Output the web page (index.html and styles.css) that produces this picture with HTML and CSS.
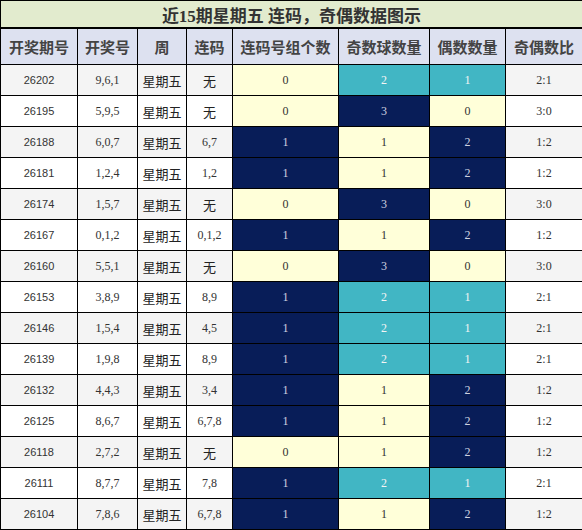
FILE: index.html
```html
<!DOCTYPE html>
<html lang="zh">
<head>
    <meta charset="UTF-8">
    <title>近15期星期五 连码，奇偶数据图示</title>
    <link rel="stylesheet" href="styles.css">
</head>
<body>
    <table class="chart">
        <colgroup>
            <col class="w-issue">
            <col class="w-nums">
            <col class="w-week">
            <col class="w-link">
            <col class="w-group">
            <col class="w-odd">
            <col class="w-even">
            <col class="w-ratio">
        </colgroup>
        <thead>
            <tr class="title-row">
                <th colspan="8">近15期星期五 连码，奇偶数据图示</th>
            </tr>
            <tr class="head-row">
                <th>开奖期号</th>
                <th>开奖号</th>
                <th>周</th>
                <th>连码</th>
                <th>连码号组个数</th>
                <th>奇数球数量</th>
                <th>偶数数量</th>
                <th>奇偶数比</th>
            </tr>
        </thead>
        <tbody>
            <tr><td class="issue">26202</td><td>9,6,1</td><td class="cn">星期五</td><td class="cn">无</td><td class="lo">0</td><td class="mid">2</td><td class="mid">1</td><td>2:1</td></tr>
            <tr><td class="issue">26195</td><td>5,9,5</td><td class="cn">星期五</td><td class="cn">无</td><td class="lo">0</td><td class="hi">3</td><td class="lo">0</td><td>3:0</td></tr>
            <tr><td class="issue">26188</td><td>6,0,7</td><td class="cn">星期五</td><td>6,7</td><td class="hi">1</td><td class="lo">1</td><td class="hi">2</td><td>1:2</td></tr>
            <tr><td class="issue">26181</td><td>1,2,4</td><td class="cn">星期五</td><td>1,2</td><td class="hi">1</td><td class="lo">1</td><td class="hi">2</td><td>1:2</td></tr>
            <tr><td class="issue">26174</td><td>1,5,7</td><td class="cn">星期五</td><td class="cn">无</td><td class="lo">0</td><td class="hi">3</td><td class="lo">0</td><td>3:0</td></tr>
            <tr><td class="issue">26167</td><td>0,1,2</td><td class="cn">星期五</td><td>0,1,2</td><td class="hi">1</td><td class="lo">1</td><td class="hi">2</td><td>1:2</td></tr>
            <tr><td class="issue">26160</td><td>5,5,1</td><td class="cn">星期五</td><td class="cn">无</td><td class="lo">0</td><td class="hi">3</td><td class="lo">0</td><td>3:0</td></tr>
            <tr><td class="issue">26153</td><td>3,8,9</td><td class="cn">星期五</td><td>8,9</td><td class="hi">1</td><td class="mid">2</td><td class="mid">1</td><td>2:1</td></tr>
            <tr><td class="issue">26146</td><td>1,5,4</td><td class="cn">星期五</td><td>4,5</td><td class="hi">1</td><td class="mid">2</td><td class="mid">1</td><td>2:1</td></tr>
            <tr><td class="issue">26139</td><td>1,9,8</td><td class="cn">星期五</td><td>8,9</td><td class="hi">1</td><td class="mid">2</td><td class="mid">1</td><td>2:1</td></tr>
            <tr><td class="issue">26132</td><td>4,4,3</td><td class="cn">星期五</td><td>3,4</td><td class="hi">1</td><td class="lo">1</td><td class="hi">2</td><td>1:2</td></tr>
            <tr><td class="issue">26125</td><td>8,6,7</td><td class="cn">星期五</td><td>6,7,8</td><td class="hi">1</td><td class="lo">1</td><td class="hi">2</td><td>1:2</td></tr>
            <tr><td class="issue">26118</td><td>2,7,2</td><td class="cn">星期五</td><td class="cn">无</td><td class="lo">0</td><td class="lo">1</td><td class="hi">2</td><td>1:2</td></tr>
            <tr><td class="issue">26111</td><td>8,7,7</td><td class="cn">星期五</td><td>7,8</td><td class="hi">1</td><td class="mid">2</td><td class="mid">1</td><td>2:1</td></tr>
            <tr><td class="issue">26104</td><td>7,8,6</td><td class="cn">星期五</td><td>6,7,8</td><td class="hi">1</td><td class="lo">1</td><td class="hi">2</td><td>1:2</td></tr>
        </tbody>
    </table>
</body>
</html>
```

FILE: styles.css
```css
body {
    margin: 0;
    padding: 0;
    background-color: #fff;
    font-family: "Liberation Serif", "Noto Sans CJK SC", serif;
}

.chart {
    width: 582px;
    border-collapse: collapse;
    table-layout: fixed;
}

.w-issue { width: 77px; }
.w-nums { width: 60px; }
.w-week { width: 49px; }
.w-link { width: 46px; }
.w-group { width: 106px; }
.w-odd { width: 91px; }
.w-even { width: 76px; }
.w-ratio { width: 77px; }

.chart th,
.chart td {
    border: 1px solid #000;
    padding: 0;
    text-align: center;
    overflow: hidden;
    white-space: nowrap;
}

.title-row th {
    height: 26px;
    background-color: #e2ebce;
    color: #333;
    font-family: "Liberation Serif", "Noto Sans CJK SC", serif;
    font-size: 17px;
    font-weight: bold;
    border-bottom-width: 2px;
}

.head-row th {
    height: 35px;
    background-color: #dde1f0;
    color: #444;
    font-family: "Noto Sans CJK SC", sans-serif;
    font-size: 15px;
    font-weight: bold;
}

.chart td {
    height: 30px;
    font-size: 12px;
    color: #333;
}

.chart tbody tr:nth-child(odd) td {
    background-color: #f4f4f4;
}

.chart tbody tr:nth-child(even) td {
    background-color: #fff;
}

.chart td.issue {
    font-family: "Liberation Sans", sans-serif;
    font-size: 11px;
}

.chart td.cn {
    font-family: "Noto Sans CJK SC", sans-serif;
    font-size: 13px;
    color: #222;
}

.chart tbody tr td.lo {
    background-color: #ffffd9;
    color: #333;
}

.chart tbody tr td.mid {
    background-color: #41b6c4;
    color: #f4f4f4;
}

.chart tbody tr td.hi {
    background-color: #081d58;
    color: #cfd3e0;
}
```
